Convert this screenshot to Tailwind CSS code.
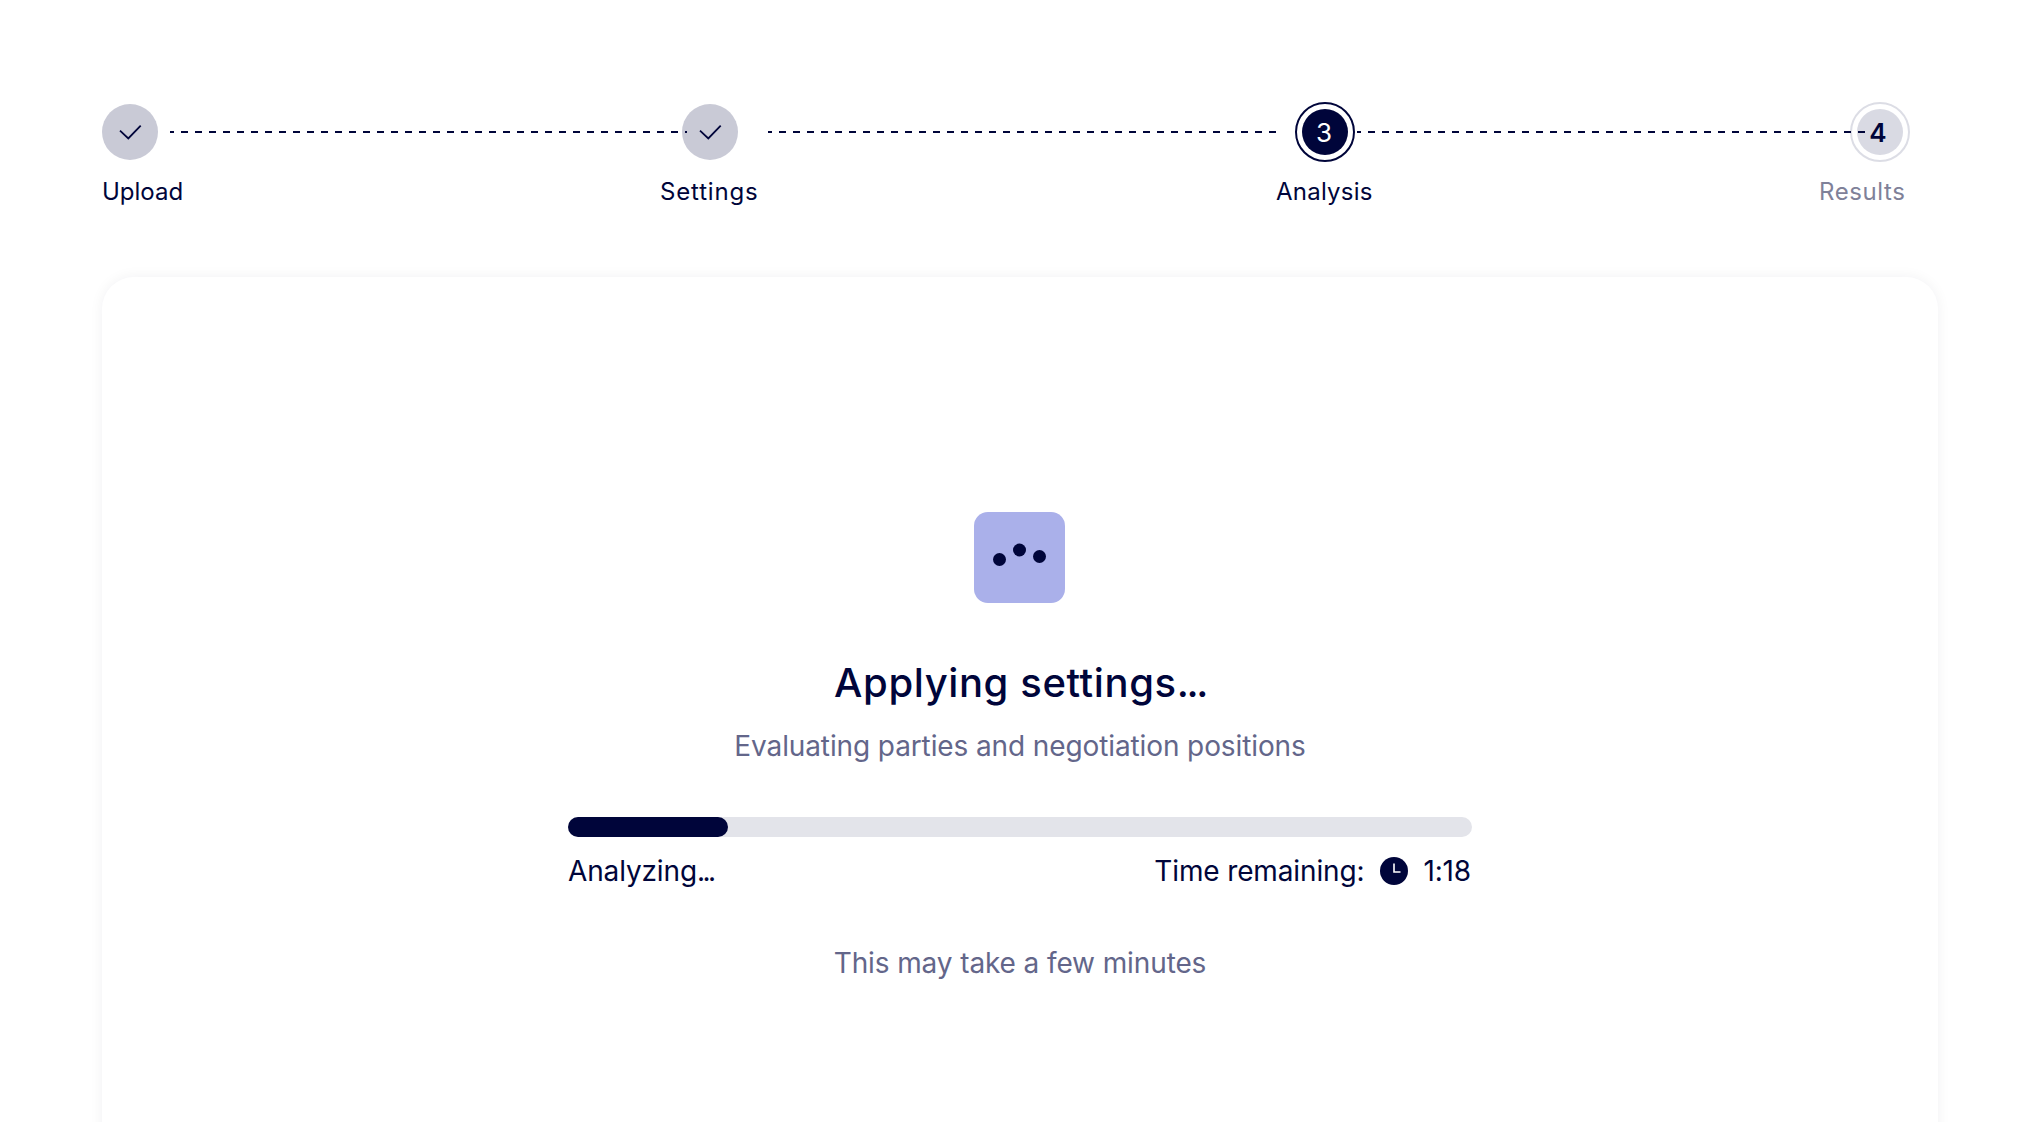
<!DOCTYPE html>
<html lang="en">
<head>
  <meta charset="UTF-8" />
  <title>Analysis</title>
  <script src="https://cdn.jsdelivr.net/npm/@tailwindcss/browser@4"></script>
</head>
<body class="bg-white h-[1122px] overflow-hidden font-['Inter',sans-serif] text-[#00053a]">
  <div class="px-[102px] pt-[102px]">

    <!-- Stepper -->
    <div class="flex items-center h-[60px]">
      <div class="w-14 h-14 rounded-full bg-[#c9cad6] flex items-center justify-center shrink-0">
        <svg width="24" height="24" viewBox="0 0 24 24" fill="none" stroke="#00053a" stroke-width="1.8"><path d="M2 10.7 10.3 18.5 22.7 5.7" /></svg>
      </div>
      <div class="ml-3 -mr-[5px] w-[517px] h-0.5 relative z-10 bg-[repeating-linear-gradient(90deg,#00053a_0,#00053a_4px,transparent_4px,transparent_11px,#00053a_11px,#00053a_14px)]"></div>
      <div class="w-14 h-14 rounded-full bg-[#c9cad6] flex items-center justify-center shrink-0">
        <svg width="24" height="24" viewBox="0 0 24 24" fill="none" stroke="#00053a" stroke-width="1.8"><path d="M2 10.7 10.3 18.5 22.7 5.7" /></svg>
      </div>
      <div class="ml-[30px] mr-[19px] w-[508px] h-0.5 bg-[repeating-linear-gradient(90deg,#00053a_0,#00053a_4px,transparent_4px,transparent_11px,#00053a_11px,#00053a_14px)]"></div>
      <div class="w-[60px] h-[60px] rounded-full border-2 border-[#00053a] flex items-center justify-center shrink-0">
        <div class="w-[46px] h-[46px] rounded-full bg-[#00053a] text-white text-[26px] pr-0.5 flex items-center justify-center">3</div>
      </div>
      <div class="ml-0.5 -mr-[19px] w-[512px] h-0.5 relative z-10 bg-[repeating-linear-gradient(90deg,#00053a_0,#00053a_4px,transparent_4px,transparent_11px,#00053a_11px,#00053a_14px)]"></div>
      <div class="w-[60px] h-[60px] rounded-full border-2 border-[#dcdde5] flex items-center justify-center shrink-0">
        <div class="w-[46px] h-[46px] rounded-full bg-[#d9dae3] text-[26px] font-semibold pr-1 flex items-center justify-center">4</div>
      </div>
    </div>

    <div class="flex text-2xl leading-8 mt-[14px]">
      <div class="w-[558px]">Upload</div>
      <div class="w-[616px] tracking-[0.035em]">Settings</div>
      <div class="w-[543px] tracking-[0.01em]">Analysis</div>
      <div class="text-[#7f8199] tracking-[0.025em]">Results</div>
    </div>

    <!-- Card -->
    <div class="mt-[69px] h-[1000px] rounded-[32px] bg-white shadow-[0_0_14px_rgba(0,5,58,0.06)] pt-[235px] flex flex-col items-center">
      <div class="w-[91px] h-[91px] mr-px rounded-[14px] bg-[#aab0ea] shrink-0">
        <svg width="91" height="91" viewBox="0 0 91 91" fill="#00053a">
          <circle cx="25.5" cy="47.5" r="6.5" />
          <circle cx="45.5" cy="38" r="6.5" />
          <circle cx="65.5" cy="44.5" r="6.5" />
        </svg>
      </div>
      <h1 class="mt-[56px] text-[40px] leading-[48px] font-medium tracking-[0.015em]">Applying settings<span class="tracking-[-0.06em]">...</span></h1>
      <p class="mt-[21px] text-[28px] leading-9 tracking-[-0.004em] text-[#63668a]">Evaluating parties and negotiation positions</p>

      <div class="mt-[53px] w-[904px]">
        <div class="h-5 rounded-full bg-[#e3e4ea]">
          <div class="w-[160px] h-5 rounded-full bg-[#00053a]"></div>
        </div>
        <div class="mt-[16px] pr-px flex items-center justify-between text-[28px] leading-9 tracking-[-0.005em]">
          <span>Analyzing<span class="tracking-[-0.09em]">...</span></span>
          <span class="flex items-center">
            Time remaining:
            <svg class="ml-4 mr-[15px]" width="28" height="28" viewBox="0 0 28 28"><circle cx="14" cy="14" r="14" fill="#00053a" /><path d="M14 6.5V15H20.5" fill="none" stroke="#fff" stroke-width="1.6" /></svg>
            1:18
          </span>
        </div>
      </div>

      <p class="mt-[56px] text-[28px] leading-9 tracking-[-0.004em] text-[#63668a]">This may take a few minutes</p>
    </div>
  </div>
</body>
</html>
